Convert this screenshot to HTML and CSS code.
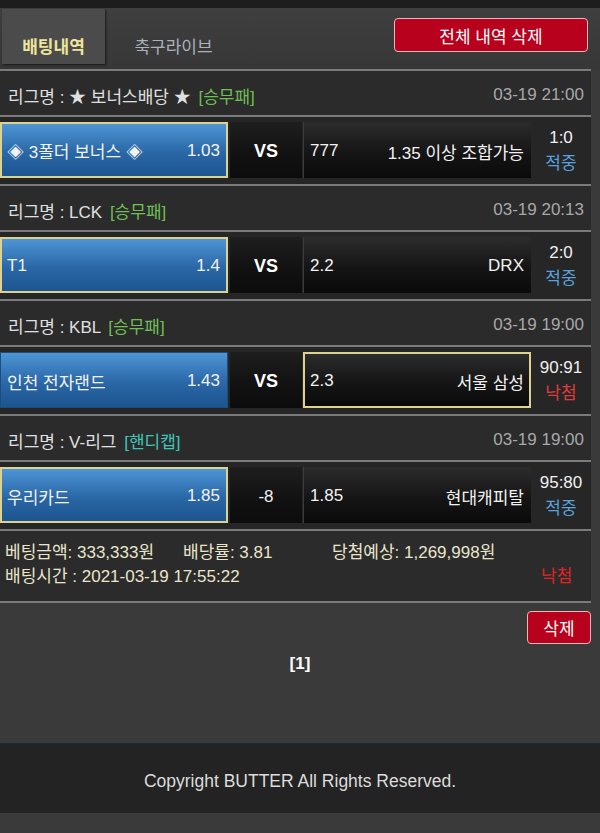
FILE: index.html
```html
<!DOCTYPE html>
<html lang="ko">
<head>
<meta charset="utf-8">
<link rel="stylesheet" href="styles.css">
</head>
<body>
<div class="topbar"></div>
<div class="tabs">
  <div class="tab active">배팅내역</div>
  <div class="tab">축구라이브</div>
  <div class="tabs-spacer"></div>
  <button class="btn-red btn-all">전체 내역 삭제</button>
</div>
<div class="list">
  <div class="league"><span>리그명 : ★ 보너스배당 ★ <span class="tag green">[승무패]</span></span><span class="date">03-19 21:00</span></div>
  <div class="match">
    <div class="team home sel"><span>◈ 3폴더 보너스 ◈</span><span>1.03</span></div>
    <div class="mid vs">VS</div>
    <div class="team away"><span>777</span><span>1.35 이상 조합가능</span></div>
    <div class="score"><span>1:0</span><span class="hit">적중</span></div>
  </div>
  <div class="league"><span>리그명 : LCK <span class="tag green">[승무패]</span></span><span class="date">03-19 20:13</span></div>
  <div class="match">
    <div class="team home sel"><span>T1</span><span>1.4</span></div>
    <div class="mid vs">VS</div>
    <div class="team away"><span>2.2</span><span>DRX</span></div>
    <div class="score"><span>2:0</span><span class="hit">적중</span></div>
  </div>
  <div class="league"><span>리그명 : KBL <span class="tag green">[승무패]</span></span><span class="date">03-19 19:00</span></div>
  <div class="match">
    <div class="team home"><span>인천 전자랜드</span><span>1.43</span></div>
    <div class="mid vs">VS</div>
    <div class="team away sel"><span>2.3</span><span>서울 삼성</span></div>
    <div class="score"><span>90:91</span><span class="miss">낙첨</span></div>
  </div>
  <div class="league"><span>리그명 : V-리그 <span class="tag teal">[핸디캡]</span></span><span class="date">03-19 19:00</span></div>
  <div class="match">
    <div class="team home sel"><span>우리카드</span><span>1.85</span></div>
    <div class="mid">-8</div>
    <div class="team away"><span>1.85</span><span>현대캐피탈</span></div>
    <div class="score"><span>95:80</span><span class="hit">적중</span></div>
  </div>
  <div class="summary">
    <div class="sum-line">
      <span class="s1">베팅금액: 333,333원</span>
      <span class="s2">배당률: 3.81</span>
      <span class="s3">당첨예상: 1,269,998원</span>
    </div>
    <div class="sum-line">
      <span class="s-time">배팅시간 : 2021-03-19 17:55:22</span>
      <span class="result-miss">낙첨</span>
    </div>
  </div>
</div>
<div class="bottom">
  <div class="del-row"><button class="btn-red btn-del">삭제</button></div>
  <div class="pager">[1]</div>
</div>
<footer class="footer">Copyright BUTTER All Rights Reserved.</footer>
</body>
</html>
```
FILE: styles.css
```css
html, body {
  margin: 0;
  padding: 0;
}
body {
  background: #3a3a3a;
  font-family: "Liberation Sans", "Noto Sans CJK KR", sans-serif;
  font-size: 17px;
  color: #e6e6e6;
  width: 600px;
  height: 833px;
  overflow: hidden;
}
.topbar {
  height: 8px;
  background: #1d1d1d;
}
.tabs {
  height: 61px;
  display: flex;
  align-items: flex-start;
  background: linear-gradient(#3f3f3f, #373737);
  padding: 1px 0 0 2px;
  box-sizing: border-box;
}
.tab {
  width: 103px;
  height: 55px;
  display: flex;
  align-items: center;
  justify-content: center;
  padding-top: 17px;
  box-sizing: border-box;
  color: #a9b1bd;
  font-size: 17px;
}
.tab.active {
  background: #4b4b4b;
  color: #ece59a;
  font-weight: bold;
  box-shadow: 1px 1px 2px rgba(0,0,0,0.6);
}
.tab + .tab {
  width: 137px;
}
.tabs-spacer { flex: 1; }
.btn-red {
  background: #b8011d;
  color: #fff;
  border: 1px solid #e9b6b9;
  border-radius: 4px;
  font-family: inherit;
  font-size: 17px;
  padding: 0;
}
.btn-all {
  width: 194px;
  height: 34px;
  margin: 9px 12px 0 0;
}
.list {
  width: 591px;
}
.league {
  border-top: 2px solid #7b7b7b;
  background: #2b2b2b;
  display: flex;
  align-items: center;
  justify-content: space-between;
  padding: 4px 7px 0 8px;
  box-sizing: border-box;
  height: 46px;
  color: #e0e0e0;
}
.tag { margin-left: 3px; }
.green { color: #6fbf55; }
.teal { color: #3fc6b8; }
.date { color: #a8a8a8; }
.match {
  border-top: 2px solid #7b7b7b;
  background: #262626;
  height: 69px;
  box-sizing: border-box;
  display: flex;
  align-items: flex-start;
  padding-top: 5px;
}
.team {
  width: 228px;
  height: 56px;
  box-sizing: border-box;
  display: flex;
  align-items: center;
  justify-content: space-between;
  padding: 2px 7px 0 6px;
  color: #f2f2f2;
}
.home {
  background: linear-gradient(#4e95d6, #2a67a6 55%, #1d5590);
  border: 1px solid #1e4d7c;
}
.away {
  background: linear-gradient(#2c2c2c, #151515 55%, #0a0a0a);
  border-left: 1px solid #3a3a3a;
  margin-left: 1px;
}
.team.sel {
  border: 2px solid #ddd38f;
}
.home.sel { padding-left: 5px; padding-right: 6px; }
.away.sel { padding-left: 5px; padding-right: 5px; }
.mid {
  width: 72px;
  height: 56px;
  margin-left: 2px;
  background: linear-gradient(#1e1e1e, #111 60%, #0c0c0c);
  display: flex;
  align-items: center;
  justify-content: center;
  padding-top: 3px;
  box-sizing: border-box;
  color: #f0f0f0;
}
.vs {
  font-weight: bold;
  font-size: 18px;
  color: #fff;
}
.score {
  width: 60px;
  display: flex;
  flex-direction: column;
  align-items: center;
  padding-top: 3px;
  line-height: 26px;
  color: #f0f0f0;
}
.hit { color: #5aa2dc; }
.miss { color: #de3c3c; }
.summary {
  border-top: 2px solid #7b7b7b;
  border-bottom: 2px solid #7b7b7b;
  background: #2b2b2b;
  height: 74px;
  box-sizing: border-box;
  padding: 7px 0 0 5px;
  color: #e9e5ca;
}
.sum-line {
  display: flex;
  align-items: center;
  height: 24px;
}
.s1 { width: 178px; }
.s2 { width: 149px; }
.s-time { width: 536px; }
.result-miss { color: #e02323; }
.bottom {
  height: 140px;
}
.del-row {
  display: flex;
  justify-content: flex-end;
  width: 591px;
  padding-top: 8px;
}
.btn-del {
  width: 64px;
  height: 33px;
}
.pager {
  text-align: center;
  font-weight: bold;
  color: #fff;
  margin-top: 10px;
}
.footer {
  height: 70px;
  background: #232323;
  border-top: 1px solid #1c2a33;
  box-sizing: border-box;
  display: flex;
  align-items: center;
  justify-content: center;
  padding-top: 6px;
  color: #dcdcdc;
  font-size: 17.5px;
}
```
